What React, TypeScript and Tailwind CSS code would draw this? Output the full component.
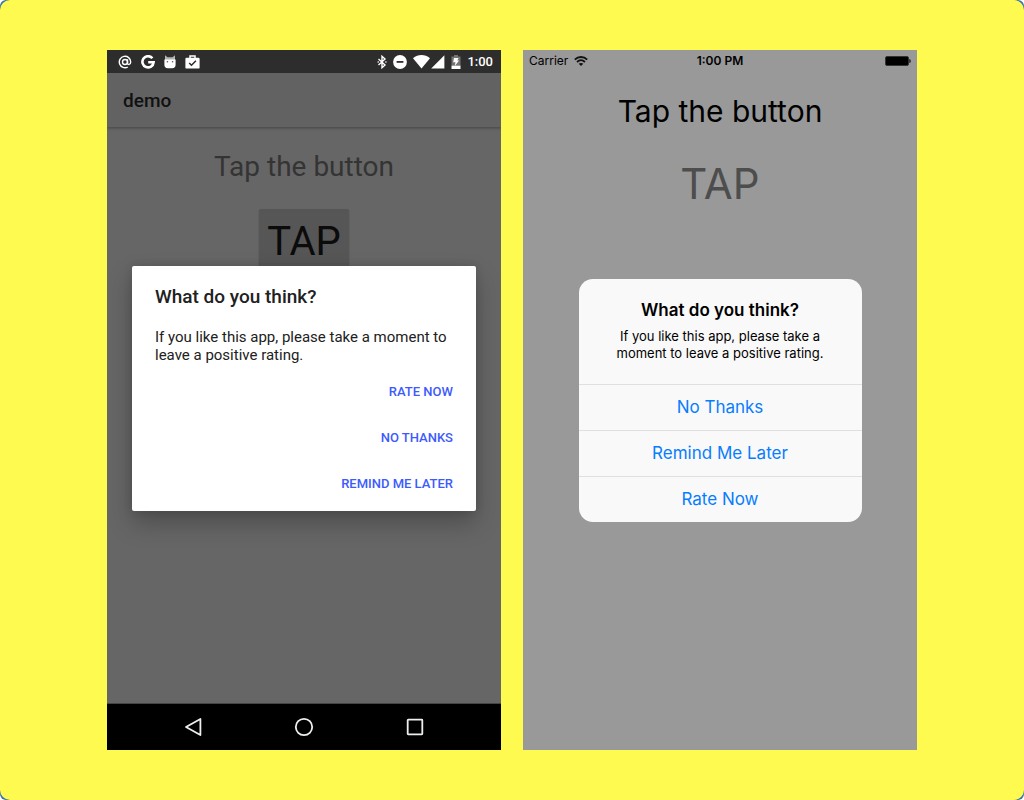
import type { ReactNode } from "react";

function BluetoothIcon() {
  return (
    <svg viewBox="0 0 10 14" className="h-3.5 w-2.5" fill="none" stroke="#fff" strokeWidth="1.4" aria-hidden="true">
      <path d="M1.5 4 8 10 5 12.7V1.3L8 4 1.5 10" />
      <path d="M.6 7h1.2M8.3 7h1.2" />
    </svg>
  );
}

function DoNotDisturbIcon() {
  return (
    <svg viewBox="0 0 14 14" className="size-3.5" aria-hidden="true">
      <circle cx="7" cy="7" r="6.9" fill="#fff" />
      <rect x="3.6" y="6" width="6.8" height="1.8" fill="#2d2d2d" />
    </svg>
  );
}

function AndroidWifiIcon() {
  return (
    <svg viewBox="0 0 17 14" className="h-3.5 w-[17px]" aria-hidden="true">
      <path d="M0 3.2C5-1 12-1 17 3.2L8.5 13.6Z" fill="#fff" />
    </svg>
  );
}

function SignalIcon() {
  return (
    <svg viewBox="0 0 14 14" className="size-3.5" aria-hidden="true">
      <path d="M13.4.2v13.3H.2Z" fill="#fff" />
    </svg>
  );
}

function ChargingIcon() {
  return (
    <svg viewBox="0 0 10 14" className="h-3.5 w-2.5" aria-hidden="true">
      <path d="M.5 1.5H3V0h4v1.5h2.5V11h-9Z" fill="#747474" />
      <path d="M.5 10.7h9V14h-9Z" fill="#fff" />
      <path d="M3 3h4.5L6.3 5.5h1.8L3.8 11l.7-3.7H2.2Z" fill="#fff" />
    </svg>
  );
}

function AtIcon() {
  return (
    <svg viewBox="0 0 14 14" className="size-3.5" fill="none" stroke="#fff" strokeWidth="1.4" aria-hidden="true">
      <circle cx="7" cy="7" r="2.5" />
      <path d="M9.5 4.3v3.9c0 1.9 3.2 1.8 3.2-1.2A5.7 5.7 0 1 0 9.8 12" />
    </svg>
  );
}

function GoogleIcon() {
  return (
    <svg viewBox="0 0 14 14" className="size-3.5" fill="none" stroke="#fff" strokeWidth="2.6" aria-hidden="true">
      <path d="M11.4 3.3A5.6 5.6 0 1 0 12.6 7.3H7.2" />
    </svg>
  );
}

function CatIcon() {
  return (
    <svg viewBox="0 0 12 14" className="h-3.5 w-3" aria-hidden="true">
      <path d="M1 .3 3.5 2.2h5L11 .3V5H1Z" fill="#b4b4b4" />
      <path d="M.4 4.6h11.2v5.2a3.4 3.4 0 0 1-3.4 3.4H3.8A3.4 3.4 0 0 1 .4 9.8Z" fill="#fff" />
      <circle cx="3.4" cy="6.7" r=".8" fill="#555" />
      <circle cx="8.6" cy="6.7" r=".8" fill="#555" />
    </svg>
  );
}

function TaskIcon() {
  return (
    <svg viewBox="0 0 15 14" className="h-3.5 w-[15px]" aria-hidden="true">
      <path d="M5 3.2V1h5v2.2" fill="none" stroke="#fff" strokeWidth="1.5" />
      <rect x=".4" y="2.8" width="14.2" height="10.8" rx="1.2" fill="#fff" />
      <path d="m4.2 8 2.3 2.3 4.4-4.5" fill="none" stroke="#2d2d2d" strokeWidth="1.5" />
    </svg>
  );
}

function IosWifiIcon() {
  return (
    <svg viewBox="0 0 14 10" className="h-2.5 w-3.5" fill="none" stroke="#111" aria-hidden="true">
      <path d="M.8 3.6C4.3.2 9.7.2 13.2 3.6" strokeWidth="1.9" />
      <path d="M3 6C5.4 3.8 8.600 3.8 11 6" strokeWidth="1.8" />
      <path d="M4.700 7.700c1.300-1.100 3.300-1.100 4.600 0L7 10Z" fill="#111" stroke="none" />
    </svg>
  );
}

function BatteryIcon() {
  return (
    <svg viewBox="0 0 26 10" className="h-2.5 w-[26px]" aria-hidden="true">
      <rect x=".5" y=".5" width="23" height="9" rx="1.5" fill="#000" stroke="#333" />
      <path d="M24.3 3c1.900 0 1.900 4 0 4Z" fill="#111" />
    </svg>
  );
}

function NavButton({ label, children }: { label: string; children: ReactNode }) {
  return (
    <button type="button" aria-label={label} className="flex size-11 items-center justify-center">
      <svg viewBox="0 0 20 20" className="size-5" fill="none" stroke="#eee" strokeWidth="1.8" strokeLinejoin="round" aria-hidden="true">
        {children}
      </svg>
    </button>
  );
}

function AndroidPhone() {
  const actions = ["RATE NOW", "NO THANKS", "REMIND ME LATER"];
  return (
    <section aria-label="Android" className="flex flex-col bg-[#666] font-['Roboto',sans-serif]">
      <header className="flex h-[23px] items-center justify-between bg-[#2d2d2d] pl-[11px] pr-2 text-white">
        <div className="flex items-center gap-[9px]">
          <AtIcon />
          <GoogleIcon />
          <CatIcon />
          <TaskIcon />
        </div>
        <div className="flex items-center">
          <div className="flex items-center gap-[6px]">
            <BluetoothIcon />
            <DoNotDisturbIcon />
          </div>
          <div className="flex items-center gap-px px-[6px]">
            <AndroidWifiIcon />
            <SignalIcon />
          </div>
          <ChargingIcon />
          <span className="pl-[6px] pt-px text-[13px] font-medium">1:00</span>
        </div>
      </header>
      <div className="relative flex flex-1 flex-col overflow-hidden">
        <div className="flex h-[54px] items-center bg-[#626262] px-4 pt-[2px] shadow-[0_1px_3px_rgba(0,0,0,0.35)]">
          <h1 className="text-[19px] font-medium text-[#111]">demo</h1>
        </div>
        <div className="flex flex-col items-center pt-5">
          <p className="text-[28px] leading-10 text-[#343434]">Tap the button</p>
          <button type="button" className="mt-[22px] h-[66px] rounded-[2px] bg-[#565656] px-2 text-[40px] leading-[66px] text-[#0b0b0b] shadow-[0_1px_2px_rgba(0,0,0,0.2)]">
            TAP
          </button>
        </div>
        <div className="absolute inset-0 flex items-center justify-center px-[25px]">
          <div role="dialog" aria-labelledby="android-title" className="w-full max-w-[344px] rounded-[2px] bg-white px-[23px] pb-1 pt-[18px] shadow-[0_12px_24px_rgba(0,0,0,0.25),0_0_10px_rgba(0,0,0,0.12)]">
            <h2 id="android-title" className="text-[19px] font-medium leading-[26px] text-[#212121]">What do you think?</h2>
            <p className="pt-[18px] text-[15px] leading-[18px] text-[#212121]">If you like this app, please take a moment to leave a positive rating.</p>
            <div className="flex flex-col items-end pt-[5px]">
              {actions.map((action) => (
                <button key={action} type="button" className="h-[46px] text-[13px] font-medium text-[#3d5afe]">
                  {action}
                </button>
              ))}
            </div>
          </div>
        </div>
      </div>
      <nav className="flex h-[47px] items-center justify-between border-t border-[#444] bg-black px-16">
        <NavButton label="Back">
          <path d="M17.4 2v16L3 10Z" />
        </NavButton>
        <NavButton label="Home">
          <circle cx="10" cy="10" r="8.2" />
        </NavButton>
        <NavButton label="Recent apps">
          <rect x="2.7" y="2.7" width="14.6" height="14.6" rx=".5" />
        </NavButton>
      </nav>
    </section>
  );
}

function IosPhone() {
  const actions = ["No Thanks", "Remind Me Later", "Rate Now"];
  return (
    <section aria-label="iOS" className="relative flex flex-col bg-[#999] font-['Inter',sans-serif] text-black">
      <header className="grid h-[22px] grid-cols-3 items-center px-[6px] text-xs">
        <div className="flex items-center gap-[6px]">
          <span>Carrier</span>
          <IosWifiIcon />
        </div>
        <span className="text-center font-semibold">1:00 PM</span>
        <div className="flex justify-end">
          <BatteryIcon />
        </div>
      </header>
      <div className="flex flex-col items-center pt-[19px]">
        <p className="text-[30px] leading-10">Tap the button</p>
        <button type="button" className="mt-[23px] text-[42px] leading-[60px] text-[#4d4d4d]">TAP</button>
      </div>
      <div className="absolute inset-0 flex items-center justify-center px-4">
        <div role="dialog" aria-labelledby="ios-title" className="w-full max-w-[283px] overflow-hidden rounded-[14px] bg-[#f9f9f9]">
          <div className="px-5 pb-[22px] pt-[19px] text-center">
            <h2 id="ios-title" className="text-[17px] font-semibold leading-6">What do you think?</h2>
            <p className="pt-[6px] text-[13px] leading-[17px]">If you like this app, please take a moment to leave a positive rating.</p>
          </div>
          {actions.map((action) => (
            <button key={action} type="button" className="block h-[46px] w-full border-t border-[#dfe0e0] pt-[2px] text-[17px] text-[#087dff]">
              {action}
            </button>
          ))}
        </div>
      </div>
    </section>
  );
}

export default function App() {
  return (
    <div className="bg-white">
      <div className="rounded-md bg-[#3c6fa8]">
        <main className="flex min-h-screen justify-center rounded-[10px] bg-[#fffa50] px-6 py-[50px]">
          <div className="grid w-full max-w-[810px] grid-cols-2 gap-[22px]">
            <AndroidPhone />
            <IosPhone />
          </div>
        </main>
      </div>
    </div>
  );
}
